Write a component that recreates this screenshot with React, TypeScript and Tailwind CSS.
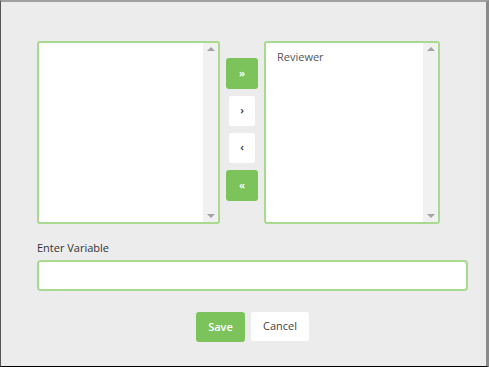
import React from "react";

function ScrollList({ items, width }: { items: string[]; width: string }) {
  return (
    <div className={`${width} h-[183px] flex bg-white border-2 border-[#a8da90] rounded-[3px] overflow-hidden`}>
      <div className="flex-1 pl-[11px] pt-[6px]">
        {items.map((it) => (
          <div key={it} className="text-[11px] text-[#555] leading-[16px]">
            {it}
          </div>
        ))}
      </div>
      <div className="w-[15px] bg-[#f1f1f1] flex flex-col justify-between items-center py-[4px]">
        <span className="w-0 h-0 border-x-[4px] border-x-transparent border-b-[4px] border-b-[#a3a3a3]" />
        <span className="w-0 h-0 border-x-[4px] border-x-transparent border-t-[4px] border-t-[#a3a3a3]" />
      </div>
    </div>
  );
}

export default function App() {
  return (
    <div
      className="w-[489px] h-[367px] bg-[#ececec] border-l border-l-[#555] border-t-2 border-t-[#a0a0a0] border-r-[3px] border-r-[#8a8a8a] border-b border-b-black"
      style={{ fontFamily: '"Open Sans", "Liberation Sans", sans-serif' }}
    >
      <div className="pl-[36px] pr-[19px] pt-[39px]">
        <div className="flex items-center gap-[6px]">
          <ScrollList items={[]} width="w-[183px]" />
          <div className="w-[32px] flex flex-col items-center gap-[7px] mt-[-7px]">
            <button className="w-[32px] h-[31px] bg-[#7bc35a] rounded-[3px] text-white text-[11px] font-semibold">
              »
            </button>
            <button className="w-[26px] h-[30px] bg-white rounded-[2px] text-[#334] text-[11px] font-semibold">
              ›
            </button>
            <button className="w-[26px] h-[30px] bg-white rounded-[2px] text-[#334] text-[11px] font-semibold">
              ‹
            </button>
            <button className="w-[32px] h-[31px] bg-[#7bc35a] rounded-[3px] text-white text-[11px] font-semibold">
              «
            </button>
          </div>
          <ScrollList items={["Reviewer"]} width="w-[176px]" />
        </div>
        <div className="mt-[16px] text-[11px] text-[#333] leading-[16px]">Enter Variable</div>
        <input className="mt-[4px] w-[431px] h-[31px] bg-white border-2 border-[#a8da90] rounded-[4px] outline-none px-2 text-[11px]" />
        <div className="mt-[21px] flex justify-center gap-[6px] w-[431px]">
          <button className="w-[49px] h-[30px] bg-[#7bc35a] rounded-[3px] text-white text-[11px] font-semibold">
            Save
          </button>
          <button className="w-[58px] h-[29px] bg-white rounded-[2px] text-[#444] text-[11px]">
            Cancel
          </button>
        </div>
      </div>
    </div>
  );
}
